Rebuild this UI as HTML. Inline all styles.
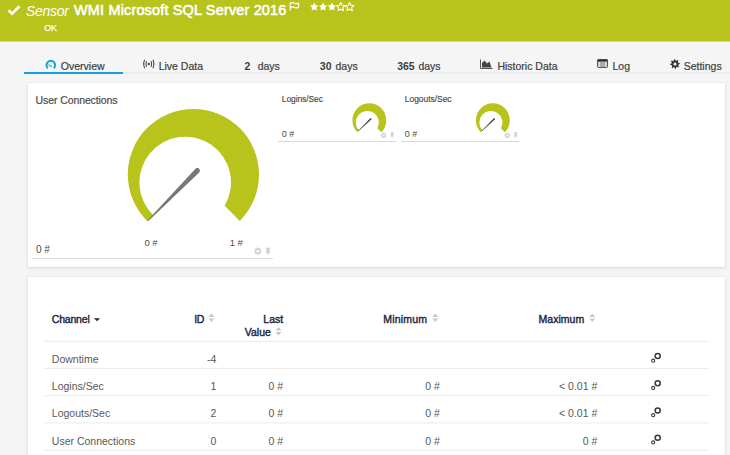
<!DOCTYPE html>
<html><head><meta charset="utf-8"><style>
html,body{margin:0;padding:0;}
body{width:730px;height:455px;overflow:hidden;position:relative;background:#f5f5f5;font-family:"Liberation Sans", sans-serif;}
.t{position:absolute;white-space:nowrap;}
</style></head><body>
<div style="position:absolute;left:0px;top:0px;width:730px;height:41px;background:#b8c41c;"></div>
<div style="position:absolute;left:0px;top:41px;width:730px;height:1px;background:#d4db80;"></div>
<div class="t" style="left:26.00px;top:3.65px;font-size:14px;line-height:14px;color:#fff;font-weight:normal;font-style:italic;letter-spacing:-0.3px;">Sensor</div>
<div class="t" style="left:74.00px;top:3.33px;font-size:14.5px;line-height:14.5px;color:#fff;font-weight:normal;font-style:normal;letter-spacing:0.15px;-webkit-text-stroke:0.55px #fff;">WMI Microsoft SQL Server 2016</div>
<div class="t" style="left:44.30px;top:23.98px;font-size:9px;line-height:9px;color:#fff;font-weight:normal;font-style:normal;letter-spacing:-0.3px;-webkit-text-stroke:0.25px #fff;">OK</div>
<svg style="position:absolute;left:7px;top:4.8px" width="14" height="12" viewBox="0 0 14 12"><path d="M1.6 5.2 L5 8.6 L12.5 1.3" fill="none" stroke="#fff" stroke-width="2.7"/></svg>
<svg style="position:absolute;left:289px;top:2px" width="11" height="9" viewBox="0 0 11 9"><path d="M1.2 0.6 V8.4 M1.2 1.2 Q3.2 0.2 5.2 1.2 T9.6 1.2 V5.4 Q7.6 6.4 5.4 5.4 T1.2 5.4" fill="none" stroke="#fff" stroke-width="1.2"/></svg>
<svg style="position:absolute;left:308px;top:1px" width="50" height="12" viewBox="0 0 50 12"><polygon points="6.20,1.55 7.51,4.20 10.43,4.62 8.32,6.69 8.82,9.60 6.20,8.22 3.58,9.60 4.08,6.69 1.97,4.62 4.89,4.20" fill="#fff"/><polygon points="15.05,1.55 16.36,4.20 19.28,4.62 17.17,6.69 17.67,9.60 15.05,8.22 12.43,9.60 12.93,6.69 10.82,4.62 13.74,4.20" fill="#fff"/><polygon points="23.90,1.55 25.21,4.20 28.13,4.62 26.02,6.69 26.52,9.60 23.90,8.22 21.28,9.60 21.78,6.69 19.67,4.62 22.59,4.20" fill="#fff"/><polygon points="32.75,1.55 34.06,4.20 36.98,4.62 34.87,6.69 35.37,9.60 32.75,8.22 30.13,9.60 30.63,6.69 28.52,4.62 31.44,4.20" fill="none" stroke="#fff" stroke-width="1.1" stroke-linejoin="round"/><polygon points="41.60,1.55 42.91,4.20 45.83,4.62 43.72,6.69 44.22,9.60 41.60,8.22 38.98,9.60 39.48,6.69 37.37,4.62 40.29,4.20" fill="none" stroke="#fff" stroke-width="1.1" stroke-linejoin="round"/></svg>
<div style="position:absolute;left:24px;top:72px;width:706px;height:2px;background:#ebebeb;"></div>
<div style="position:absolute;left:24px;top:72px;width:99px;height:2px;background:#13a0db;"></div>
<div class="t" style="left:60.80px;top:60.91px;font-size:10.5px;line-height:10.5px;color:#404040;font-weight:normal;font-style:normal;letter-spacing:0px;-webkit-text-stroke:0.2px #404040;">Overview</div>
<div class="t" style="left:158.70px;top:60.91px;font-size:10.5px;line-height:10.5px;color:#404040;font-weight:normal;font-style:normal;letter-spacing:0px;-webkit-text-stroke:0.2px #404040;">Live Data</div>
<div class="t" style="left:244.50px;top:60.91px;font-size:10.5px;line-height:10.5px;color:#404040;font-weight:bold;font-style:normal;letter-spacing:0px;">2</div>
<div class="t" style="left:257.70px;top:60.91px;font-size:10.5px;line-height:10.5px;color:#404040;font-weight:normal;font-style:normal;letter-spacing:0px;-webkit-text-stroke:0.2px #404040;">days</div>
<div class="t" style="left:319.80px;top:60.91px;font-size:10.5px;line-height:10.5px;color:#404040;font-weight:bold;font-style:normal;letter-spacing:0px;">30</div>
<div class="t" style="left:335.50px;top:60.91px;font-size:10.5px;line-height:10.5px;color:#404040;font-weight:normal;font-style:normal;letter-spacing:0px;-webkit-text-stroke:0.2px #404040;">days</div>
<div class="t" style="left:397.30px;top:60.91px;font-size:10.5px;line-height:10.5px;color:#404040;font-weight:bold;font-style:normal;letter-spacing:-0.15px;">365</div>
<div class="t" style="left:418.40px;top:60.91px;font-size:10.5px;line-height:10.5px;color:#404040;font-weight:normal;font-style:normal;letter-spacing:0px;-webkit-text-stroke:0.2px #404040;">days</div>
<div class="t" style="left:497.40px;top:60.91px;font-size:10.5px;line-height:10.5px;color:#404040;font-weight:normal;font-style:normal;letter-spacing:0px;-webkit-text-stroke:0.2px #404040;">Historic Data</div>
<div class="t" style="left:612.50px;top:60.91px;font-size:10.5px;line-height:10.5px;color:#404040;font-weight:normal;font-style:normal;letter-spacing:0px;-webkit-text-stroke:0.2px #404040;">Log</div>
<div class="t" style="left:683.70px;top:60.91px;font-size:10.5px;line-height:10.5px;color:#404040;font-weight:normal;font-style:normal;letter-spacing:0px;-webkit-text-stroke:0.2px #404040;">Settings</div>
<svg style="position:absolute;left:44px;top:59px" width="14" height="11" viewBox="0 0 14 11"><path d="M3.76 9.2 A4.3 4.3 0 1 1 9.84 9.2" fill="none" stroke="#13a0db" stroke-width="2"/><path d="M4.5 5.6 L7.7 7.7" stroke="#13a0db" stroke-width="1.1"/></svg>
<svg style="position:absolute;left:143px;top:59px" width="12" height="10" viewBox="0 0 12 10"><circle cx="5.8" cy="5" r="1.2" fill="#444"/><path d="M3.6 2.2 Q2.3 5 3.6 7.8 M8 2.2 Q9.3 5 8 7.8 M1.7 0.8 Q-0.3 5 1.7 9.2 M9.9 0.8 Q11.9 5 9.9 9.2" fill="none" stroke="#444" stroke-width="1.05"/></svg>
<svg style="position:absolute;left:480px;top:59px" width="13" height="10" viewBox="0 0 13 10"><path d="M0.5 0.5 V9.5 H12.5" fill="none" stroke="#555" stroke-width="1"/><path d="M2 8.5 V4 L4.5 1.5 L7 4.5 L9.5 2.5 L11.5 8.5 Z" fill="#444"/></svg>
<svg style="position:absolute;left:597px;top:59px" width="11" height="9" viewBox="0 0 11 9"><rect x="0.5" y="0.5" width="10" height="8" rx="1" fill="#aaa" stroke="#555" stroke-width="1"/><rect x="0.5" y="0.5" width="10" height="2" fill="#333"/><rect x="1.5" y="3" width="1.2" height="5" fill="#eee"/><rect x="8.3" y="3" width="1.2" height="5" fill="#eee"/></svg>
<svg style="position:absolute;left:669.6px;top:59px" width="11" height="11" viewBox="0 0 11 11"><path d="M9.71,4.06 L9.80,5.00 L8.33,5.66 L8.14,6.30 L8.99,7.67 L8.39,8.39 L6.89,7.83 L6.30,8.14 L5.94,9.71 L5.00,9.80 L4.34,8.33 L3.70,8.14 L2.33,8.99 L1.61,8.39 L2.17,6.89 L1.86,6.30 L0.29,5.94 L0.20,5.00 L1.67,4.34 L1.86,3.70 L1.01,2.33 L1.61,1.61 L3.11,2.17 L3.70,1.86 L4.06,0.29 L5.00,0.20 L5.66,1.67 L6.30,1.86 L7.67,1.01 L8.39,1.61 L7.83,3.11 L8.14,3.70 Z" fill="#333"/><circle cx="5" cy="5" r="1.6" fill="#f5f5f5"/></svg>
<div style="position:absolute;left:28px;top:83px;width:697px;height:184px;background:#fff;box-shadow:0 1px 3px rgba(0,0,0,0.12), 0 0 1px rgba(0,0,0,0.08);"></div>
<div style="position:absolute;left:28px;top:277px;width:697px;height:200px;background:#fff;box-shadow:0 1px 3px rgba(0,0,0,0.12), 0 0 1px rgba(0,0,0,0.08);"></div>
<svg style="position:absolute;left:0;top:0" width="730" height="455" viewBox="0 0 730 455"><path d="M147.01 220.89 A65.6 65.6 0 1 1 239.79 220.89 L224.66 205.76 A45.8 45.8 0 1 0 152.91 214.99 Z" fill="#b8c41c"/><path d="M148.19 221.19 L199.15 172.43 A2.6 2.6 0 0 0 195.45 168.77 L147.41 220.41 Z" fill="#777"/><path d="M357.36 132.24 A16.95 16.95 0 1 1 381.34 132.24 L377.34 128.24 A11.55 11.55 0 1 0 359.08 130.52 Z" fill="#b8c41c"/><path d="M358.44 131.14 L371.32 119.44 A0.75 0.75 0 0 0 370.28 118.36 L358.16 130.86 Z" fill="#4a4a4a"/><path d="M480.86 132.24 A16.95 16.95 0 1 1 504.84 132.24 L500.84 128.24 A11.55 11.55 0 1 0 482.58 130.52 Z" fill="#b8c41c"/><path d="M481.94 131.14 L494.82 119.44 A0.75 0.75 0 0 0 493.78 118.36 L481.66 130.86 Z" fill="#4a4a4a"/><rect x="31.5" y="258" width="241.3" height="1" fill="#d8d8d8"/><rect x="277.5" y="141" width="118.5" height="1" fill="#d8d8d8"/><rect x="401" y="141" width="118" height="1" fill="#d8d8d8"/><path d="M261.63,250.44 L261.70,251.20 L260.64,251.77 L260.48,252.31 L261.04,253.37 L260.56,253.96 L259.41,253.61 L258.91,253.88 L258.56,255.03 L257.80,255.10 L257.23,254.04 L256.69,253.88 L255.63,254.44 L255.04,253.96 L255.39,252.81 L255.12,252.31 L253.97,251.96 L253.90,251.20 L254.96,250.63 L255.12,250.09 L254.56,249.03 L255.04,248.44 L256.19,248.79 L256.69,248.52 L257.04,247.37 L257.80,247.30 L258.37,248.36 L258.91,248.52 L259.97,247.96 L260.56,248.44 L260.21,249.59 L260.48,250.09 Z" fill="#cfd0d2"/><circle cx="257.8" cy="251.2" r="1.25" fill="#fff"/><path d="M266.00 247.70 L270.50 247.70 L270.50 248.90 L269.60 248.90 L269.60 252.10 L271.00 253.30 L265.00 253.30 L266.40 252.10 L266.40 248.90 L266.00 248.90 Z" fill="#cfd0d2"/><rect x="267.60" y="253.30" width="0.90" height="2.20" fill="#cfd0d2"/><path d="M386.70,134.91 L386.75,135.50 L385.94,135.94 L385.81,136.35 L386.25,137.17 L385.87,137.62 L384.99,137.36 L384.60,137.56 L384.34,138.45 L383.75,138.50 L383.31,137.69 L382.90,137.56 L382.08,138.00 L381.63,137.62 L381.89,136.74 L381.69,136.35 L380.80,136.09 L380.75,135.50 L381.56,135.06 L381.69,134.65 L381.25,133.83 L381.63,133.38 L382.51,133.64 L382.90,133.44 L383.16,132.55 L383.75,132.50 L384.19,133.31 L384.60,133.44 L385.42,133.00 L385.87,133.38 L385.61,134.26 L385.81,134.65 Z" fill="#cfd0d2"/><circle cx="383.75" cy="135.5" r="0.9625" fill="#fff"/><path d="M390.57 132.20 L394.04 132.20 L394.04 133.12 L393.34 133.12 L393.34 135.59 L394.42 136.51 L389.80 136.51 L390.88 135.59 L390.88 133.12 L390.57 133.12 Z" fill="#cfd0d2"/><rect x="391.80" y="136.51" width="0.69" height="1.69" fill="#cfd0d2"/><path d="M510.20,134.91 L510.25,135.50 L509.44,135.94 L509.31,136.35 L509.75,137.17 L509.37,137.62 L508.49,137.36 L508.10,137.56 L507.84,138.45 L507.25,138.50 L506.81,137.69 L506.40,137.56 L505.58,138.00 L505.13,137.62 L505.39,136.74 L505.19,136.35 L504.30,136.09 L504.25,135.50 L505.06,135.06 L505.19,134.65 L504.75,133.83 L505.13,133.38 L506.01,133.64 L506.40,133.44 L506.66,132.55 L507.25,132.50 L507.69,133.31 L508.10,133.44 L508.92,133.00 L509.37,133.38 L509.11,134.26 L509.31,134.65 Z" fill="#cfd0d2"/><circle cx="507.25" cy="135.5" r="0.9625" fill="#fff"/><path d="M514.07 132.20 L517.53 132.20 L517.53 133.12 L516.84 133.12 L516.84 135.59 L517.92 136.51 L513.30 136.51 L514.38 135.59 L514.38 133.12 L514.07 133.12 Z" fill="#cfd0d2"/><rect x="515.30" y="136.51" width="0.69" height="1.69" fill="#cfd0d2"/></svg>
<div class="t" style="left:35.60px;top:95.31px;font-size:10.5px;line-height:10.5px;color:#4e4e4e;font-weight:normal;font-style:normal;letter-spacing:-0.1px;-webkit-text-stroke:0.22px #4e4e4e;">User Connections</div>
<div class="t" style="left:281.80px;top:94.90px;font-size:8.5px;line-height:8.5px;color:#4a4a4a;font-weight:normal;font-style:normal;letter-spacing:-0.1px;-webkit-text-stroke:0.15px #4a4a4a;">Logins/Sec</div>
<div class="t" style="left:404.80px;top:94.90px;font-size:8.5px;line-height:8.5px;color:#4a4a4a;font-weight:normal;font-style:normal;letter-spacing:-0.05px;-webkit-text-stroke:0.15px #4a4a4a;">Logouts/Sec</div>
<div class="t" style="left:281.80px;top:129.68px;font-size:9px;line-height:9px;color:#4a4a4a;font-weight:normal;font-style:normal;letter-spacing:0px;">0 #</div>
<div class="t" style="left:404.80px;top:129.68px;font-size:9px;line-height:9px;color:#4a4a4a;font-weight:normal;font-style:normal;letter-spacing:0px;">0 #</div>
<div class="t" style="left:35.90px;top:244.53px;font-size:10px;line-height:10px;color:#4a4a4a;font-weight:normal;font-style:normal;letter-spacing:0px;">0 #</div>
<div class="t" style="left:144.40px;top:237.96px;font-size:9.5px;line-height:9.5px;color:#4a4a4a;font-weight:normal;font-style:normal;letter-spacing:0px;">0 #</div>
<div class="t" style="left:229.70px;top:237.96px;font-size:9.5px;line-height:9.5px;color:#4a4a4a;font-weight:normal;font-style:normal;letter-spacing:0px;">1 #</div>
<svg style="position:absolute;left:0;top:0" width="730" height="455" viewBox="0 0 730 455"><rect x="43.5" y="340.8" width="666" height="1" fill="#ececec"/><rect x="43.5" y="367.9" width="666" height="1" fill="#ececec"/><rect x="43.5" y="395.15" width="666" height="1" fill="#ececec"/><rect x="43.5" y="422.4" width="666" height="1" fill="#ececec"/><rect x="43.5" y="449.65" width="666" height="1" fill="#ececec"/><path d="M94 318.3 H100 L97 321.3 Z" fill="#1c2541"/><path d="M208.5 317.0 L211.5 313.5 L214.5 317.0 Z" fill="#c8c8c8"/><path d="M208.5 318.5 L211.5 322.0 L214.5 318.5 Z" fill="#c8c8c8"/><path d="M275.5 330.5 L278.5 327 L281.5 330.5 Z" fill="#c8c8c8"/><path d="M275.5 332 L278.5 335.5 L281.5 332 Z" fill="#c8c8c8"/><path d="M432.3 317.0 L435.3 313.5 L438.3 317.0 Z" fill="#c8c8c8"/><path d="M432.3 318.5 L435.3 322.0 L438.3 318.5 Z" fill="#c8c8c8"/><path d="M589.3 317.0 L592.3 313.5 L595.3 317.0 Z" fill="#c8c8c8"/><path d="M589.3 318.5 L592.3 322.0 L595.3 318.5 Z" fill="#c8c8c8"/><circle cx="657.7" cy="356.0" r="2.55" fill="none" stroke="#3a3a3a" stroke-width="1.5"/><circle cx="653.2" cy="360.7" r="1.55" fill="none" stroke="#3a3a3a" stroke-width="1.1"/><circle cx="657.7" cy="383.25" r="2.55" fill="none" stroke="#3a3a3a" stroke-width="1.5"/><circle cx="653.2" cy="387.95" r="1.55" fill="none" stroke="#3a3a3a" stroke-width="1.1"/><circle cx="657.7" cy="410.5" r="2.55" fill="none" stroke="#3a3a3a" stroke-width="1.5"/><circle cx="653.2" cy="415.2" r="1.55" fill="none" stroke="#3a3a3a" stroke-width="1.1"/><circle cx="657.7" cy="437.75" r="2.55" fill="none" stroke="#3a3a3a" stroke-width="1.5"/><circle cx="653.2" cy="442.45" r="1.55" fill="none" stroke="#3a3a3a" stroke-width="1.1"/></svg>
<div class="t" style="left:51.80px;top:313.51px;font-size:10.5px;line-height:10.5px;color:#1c2541;font-weight:normal;font-style:normal;letter-spacing:-0.2px;-webkit-text-stroke:0.4px #1c2541;">Channel</div>
<div class="t" style="left:194.20px;top:313.51px;font-size:10.5px;line-height:10.5px;color:#1c2541;font-weight:normal;font-style:normal;letter-spacing:-0.3px;-webkit-text-stroke:0.4px #1c2541;">ID</div>
<div class="t" style="right:446.80px;top:313.51px;font-size:10.5px;line-height:10.5px;color:#1c2541;font-weight:normal;font-style:normal;letter-spacing:0px;-webkit-text-stroke:0.4px #1c2541;">Last</div>
<div class="t" style="right:459.20px;top:326.71px;font-size:10.5px;line-height:10.5px;color:#1c2541;font-weight:normal;font-style:normal;letter-spacing:0px;-webkit-text-stroke:0.4px #1c2541;">Value</div>
<div class="t" style="left:383.30px;top:313.51px;font-size:10.5px;line-height:10.5px;color:#1c2541;font-weight:normal;font-style:normal;letter-spacing:0.2px;-webkit-text-stroke:0.4px #1c2541;">Minimum</div>
<div class="t" style="left:538.60px;top:313.51px;font-size:10.5px;line-height:10.5px;color:#1c2541;font-weight:normal;font-style:normal;letter-spacing:0.02px;-webkit-text-stroke:0.4px #1c2541;">Maximum</div>
<div class="t" style="left:51.80px;top:353.91px;font-size:10.5px;line-height:10.5px;color:#585858;font-weight:normal;font-style:normal;letter-spacing:0px;">Downtime</div>
<div class="t" style="right:513.70px;top:353.91px;font-size:10.5px;line-height:10.5px;color:#585858;font-weight:normal;font-style:normal;letter-spacing:0px;">-4</div>
<div class="t" style="left:51.80px;top:381.16px;font-size:10.5px;line-height:10.5px;color:#585858;font-weight:normal;font-style:normal;letter-spacing:0px;">Logins/Sec</div>
<div class="t" style="right:513.70px;top:381.16px;font-size:10.5px;line-height:10.5px;color:#585858;font-weight:normal;font-style:normal;letter-spacing:0px;">1</div>
<div class="t" style="right:446.80px;top:381.16px;font-size:10.5px;line-height:10.5px;color:#585858;font-weight:normal;font-style:normal;letter-spacing:0px;">0 #</div>
<div class="t" style="right:290.10px;top:381.16px;font-size:10.5px;line-height:10.5px;color:#585858;font-weight:normal;font-style:normal;letter-spacing:0px;">0 #</div>
<div class="t" style="right:132.70px;top:381.16px;font-size:10.5px;line-height:10.5px;color:#585858;font-weight:normal;font-style:normal;letter-spacing:0px;">&lt; 0.01 #</div>
<div class="t" style="left:51.80px;top:408.41px;font-size:10.5px;line-height:10.5px;color:#585858;font-weight:normal;font-style:normal;letter-spacing:0px;">Logouts/Sec</div>
<div class="t" style="right:513.70px;top:408.41px;font-size:10.5px;line-height:10.5px;color:#585858;font-weight:normal;font-style:normal;letter-spacing:0px;">2</div>
<div class="t" style="right:446.80px;top:408.41px;font-size:10.5px;line-height:10.5px;color:#585858;font-weight:normal;font-style:normal;letter-spacing:0px;">0 #</div>
<div class="t" style="right:290.10px;top:408.41px;font-size:10.5px;line-height:10.5px;color:#585858;font-weight:normal;font-style:normal;letter-spacing:0px;">0 #</div>
<div class="t" style="right:132.70px;top:408.41px;font-size:10.5px;line-height:10.5px;color:#585858;font-weight:normal;font-style:normal;letter-spacing:0px;">&lt; 0.01 #</div>
<div class="t" style="left:51.80px;top:435.66px;font-size:10.5px;line-height:10.5px;color:#585858;font-weight:normal;font-style:normal;letter-spacing:0px;">User Connections</div>
<div class="t" style="right:513.70px;top:435.66px;font-size:10.5px;line-height:10.5px;color:#585858;font-weight:normal;font-style:normal;letter-spacing:0px;">0</div>
<div class="t" style="right:446.80px;top:435.66px;font-size:10.5px;line-height:10.5px;color:#585858;font-weight:normal;font-style:normal;letter-spacing:0px;">0 #</div>
<div class="t" style="right:290.10px;top:435.66px;font-size:10.5px;line-height:10.5px;color:#585858;font-weight:normal;font-style:normal;letter-spacing:0px;">0 #</div>
<div class="t" style="right:132.70px;top:435.66px;font-size:10.5px;line-height:10.5px;color:#585858;font-weight:normal;font-style:normal;letter-spacing:0px;">0 #</div>
</body></html>
